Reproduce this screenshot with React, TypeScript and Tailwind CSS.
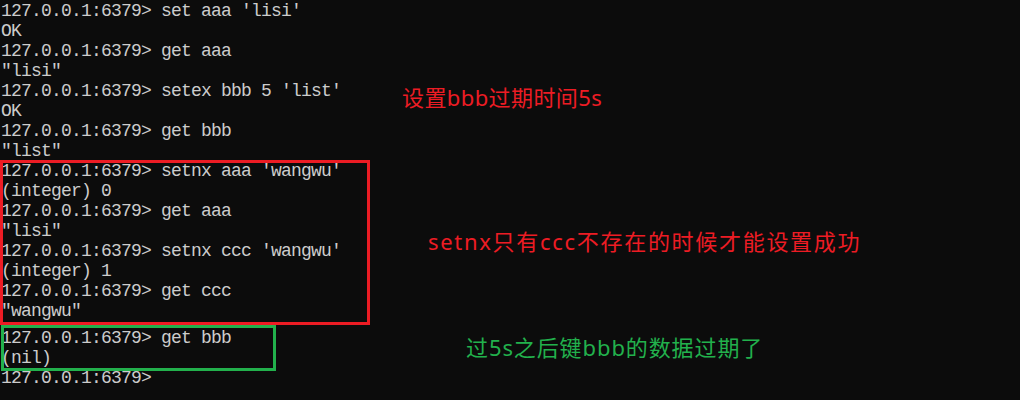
import React from "react";

const mono = { fontFamily: '"Liberation Mono", "Noto Sans CJK SC", monospace' };
const label = { fontFamily: '"Noto Sans", "Noto Sans CJK SC", sans-serif' };

const P = "127.0.0.1:6379> ";

const mainLines = [
  P + "set aaa 'lisi'",
  "OK",
  P + "get aaa",
  '"lisi"',
  P + "setex bbb 5 'list'",
  "OK",
  P + "get bbb",
  '"list"',
  P + "setnx aaa 'wangwu'",
  "(integer) 0",
  P + "get aaa",
  '"lisi"',
  P + "setnx ccc 'wangwu'",
  "(integer) 1",
  P + "get ccc",
  '"wangwu"',
];

const tailLines = [P + "get bbb", "(nil)", "127.0.0.1:6379>"];

function Line({ text }: { text: string }) {
  return <div className="h-[20px] whitespace-pre">{text}</div>;
}

export default function App() {
  return (
    <div className="relative w-[1020px] h-[400px] overflow-hidden bg-[#0c0c0c]">
      <div
        className="flex flex-col pl-[1px] pt-[1px] text-[18px] leading-[20px] tracking-[-0.8px] text-[#cccccc]"
        style={mono}
      >
        {mainLines.map((t, i) => (
          <Line key={i} text={t} />
        ))}
        <div className="mt-[7px] flex flex-col">
          {tailLines.map((t, i) => (
            <Line key={i} text={t} />
          ))}
        </div>
      </div>

      {/* annotation boxes drawn over the screenshot */}
      <div className="absolute left-0 top-[160px] w-[370px] h-[165px] border-[3px] border-[#ed1c24]" />
      <div className="absolute left-[1px] top-[325px] w-[275px] h-[46px] border-[3px] border-[#22b14c]" />

      {/* annotation labels */}
      <div
        className="absolute left-[402px] top-[84px] text-[22px] leading-[26px] tracking-[0.4px] text-[#ed1c24] whitespace-nowrap"
        style={label}
      >
        设置bbb过期时间5s
      </div>
      <div
        className="absolute left-[428px] top-[228px] text-[22px] leading-[26px] tracking-[1.7px] text-[#ed1c24] whitespace-nowrap"
        style={label}
      >
        setnx只有ccc不存在的时候才能设置成功
      </div>
      <div
        className="absolute left-[466px] top-[334px] text-[22px] leading-[26px] tracking-[0.9px] text-[#22b14c] whitespace-nowrap"
        style={label}
      >
        过5s之后键bbb的数据过期了
      </div>
    </div>
  );
}
